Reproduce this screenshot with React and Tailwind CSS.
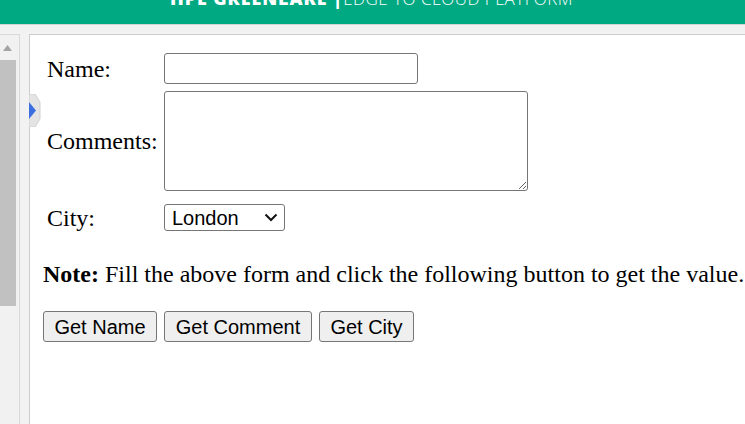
export default function App() {
  const serif = { fontFamily: '"Liberation Serif", "Times New Roman", serif' }
  const sans = { fontFamily: '"Liberation Sans", Arial, sans-serif' }

  return (
    <div className="h-[424px] w-[745px] overflow-hidden flex flex-col bg-[#f2f2f2]">
      {/* TOP BAR */}
      <header className="h-[25px] shrink-0 bg-[#01a982] overflow-hidden flex justify-center border-b border-[#d4d4d4]">
        <div className="-mt-[12px] pr-[2px] text-[17px] leading-[20px] text-white uppercase whitespace-nowrap" style={{ fontFamily: '"Open Sans", sans-serif' }}>
          <span className="font-extrabold text-[18px] tracking-[0.9px]">HPE GreenLake |</span>
          <span className="font-light tracking-[0.5px]">Edge to Cloud Platform</span>
        </div>
      </header>

      <div className="flex-1 flex pt-[9px]">
        {/* SCROLL COLUMN */}
        <div className="w-5 shrink-0 bg-[#f1f1f1] border-t border-r border-[#d9d9d9] flex flex-col">
          <div className="h-[25px] flex justify-center pt-[10px] pr-[4px]">
            <svg width="9" height="6" viewBox="0 0 9 6"><path d="M0 6 L4.5 0 L9 6 Z" fill="#a3a3a3" /></svg>
          </div>
          <div className="w-4 h-[246px] bg-[#c1c1c1]" />
        </div>

        {/* PANEL */}
        <main className="relative flex-1 ml-[9px] bg-white border-t border-l border-[#cdcdcd] pl-[13px]" style={serif}>
          <div className="absolute -left-px top-[59px] w-[12px] h-[33px]">
            <svg width="12" height="33" viewBox="0 0 12 33">
              <path d="M0 0 L6 0 L11 8 L11 25 L6 33 L0 33 Z" fill="#e4e4e4" stroke="#d0d0d0" strokeWidth="1" />
              <path d="M0 8 L7 16.5 L0 25 Z" fill="#3b6fe0" />
            </svg>
          </div>

          <div className="pt-[18px] flex flex-col text-[24px] text-black">
            <div className="flex items-center h-[31px]">
              <span className="w-[121px] pl-[4px]">Name:</span>
              <input className="w-[254px] h-[31px] border border-[#767676] rounded-[3px] bg-white" />
            </div>
            <div className="flex items-center h-[100px] mt-[7px]">
              <span className="w-[121px] pl-[4px]">Comments:</span>
              <textarea className="w-[364px] h-[100px] border border-[#767676] rounded-[3px] bg-white" />
            </div>
            <div className="flex items-center h-[27px] mt-[13px]">
              <span className="w-[121px] pl-[4px]">City:</span>
              <div className="w-[121px] h-[27px] border border-[#767676] rounded-[3px] bg-white flex items-center pl-[7px] pr-[6px] justify-between text-[20px]" style={sans}>
                <span>London</span>
                <svg width="14" height="9" viewBox="0 0 14 9"><path d="M1.5 1.5 L7 7 L12.5 1.5" fill="none" stroke="#111" strokeWidth="2" /></svg>
              </div>
            </div>

            <p className="mt-[29px] leading-[28px] whitespace-nowrap">
              <b>Note:</b> Fill the above form and click the following button to get the value.
            </p>

            <div className="flex gap-[7px] mt-[23px] text-[20px]" style={sans}>
              <button className="w-[114px] h-[31px] border border-[#767676] rounded-[3px] bg-[#efefef]">Get Name</button>
              <button className="w-[148px] h-[31px] border border-[#767676] rounded-[3px] bg-[#efefef]">Get Comment</button>
              <button className="w-[95px] h-[31px] border border-[#767676] rounded-[3px] bg-[#efefef]">Get City</button>
            </div>
          </div>
        </main>
      </div>
    </div>
  )
}
